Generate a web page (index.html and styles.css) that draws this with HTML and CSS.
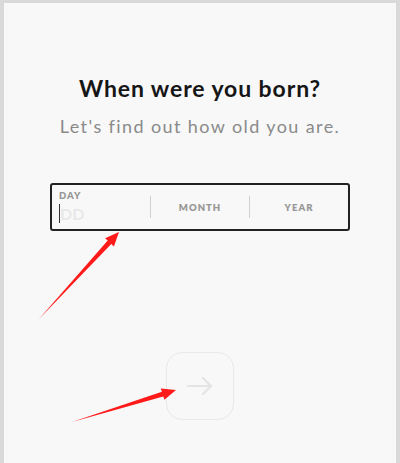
FILE: index.html
```html
<!DOCTYPE html>
<html lang="en">
<head>
  <meta charset="UTF-8" />
  <meta name="viewport" content="width=device-width, initial-scale=1.0"/>
  <title>Birthday</title>
  <link rel="stylesheet" href="styles.css">
</head>
<body>
  <!-- Main card -->
  <div class="panel">
    <h1 class="title">When were you born?</h1>
    <p class="subtitle">Let's find out how old you are.</p>

    <!-- Date of birth field -->
    <div class="date-field">
      <div class="part part-day">
        <span class="part-label">DAY</span>
        <span class="part-input"><span class="caret"></span>DD</span>
      </div>
      <span class="divider"></span>
      <div class="part"><span class="part-label">MONTH</span></div>
      <span class="divider"></span>
      <div class="part"><span class="part-label">YEAR</span></div>
    </div>

    <!-- Next button (disabled) -->
    <button class="next-btn" type="button" disabled>
      <svg width="26" height="18" viewBox="0 0 26 18" fill="none" stroke="#e4e4e4" stroke-width="2.2" stroke-linecap="round" stroke-linejoin="round">
        <path d="M1 9h23"/>
        <path d="M16 1l8 8-8 8"/>
      </svg>
    </button>
  </div>

  <!-- Red annotation arrows -->
  <svg class="annotations" width="400" height="463" viewBox="0 0 400 463">
    <polygon fill="#ff1a1a" points="39,319 111.3,244 113.9,246.4 119,232 105.1,238.2 107.7,240.6"/>
    <polygon fill="#ff1a1a" points="72,422 163.3,396.5 164.4,399.8 176,390 160.8,388.4 161.9,391.7"/>
  </svg>
</body>
</html>
```

FILE: styles.css
```css
:root {
  --page-bg: #d9d9d9;
  --panel-bg: #f8f8f8;
  --text-dark: #161616;
  --text-muted: #8a8a8a;
  --label: #979797;
  --faint: #e6e6e6;
}

body {
  margin: 0;
  height: 463px;
  overflow: hidden;
  background: var(--page-bg);
  font-family: Lato, "Noto Sans", sans-serif;
  position: relative;
}

/* Card */
.panel {
  margin: 3px 4px 0;
  height: 460px;
  background: var(--panel-bg);
  display: flex;
  flex-direction: column;
  align-items: center;
  padding-top: 70px;
  box-sizing: border-box;
}

.title {
  margin: 0;
  font-size: 23px;
  font-weight: 700;
  line-height: 30px;
  color: var(--text-dark);
  letter-spacing: 0.9px;
}

.subtitle {
  margin: 12px 0 0;
  font-size: 18px;
  line-height: 22px;
  color: var(--text-muted);
  letter-spacing: 1.4px;
}

/* Date input */
.date-field {
  margin-top: 46px;
  width: 300px;
  height: 48px;
  box-sizing: border-box;
  border: 2px solid #222;
  border-radius: 3px;
  display: flex;
  align-items: center;
}

.part {
  flex: 0 0 98px;
  box-sizing: border-box;
  display: flex;
  justify-content: center;
  align-items: center;
  height: 100%;
}

.part-day {
  flex-direction: column;
  align-items: flex-start;
  justify-content: flex-start;
  padding: 5px 0 0 7px;
}

.part-label {
  font-size: 9.5px;
  font-weight: 800;
  letter-spacing: 1px;
  color: var(--label);
  line-height: 11px;
}

.part-input {
  position: relative;
  margin-top: 3px;
  font-size: 16px;
  font-weight: 700;
  line-height: 20px;
  color: #e8e8e8;
  padding-left: 1px;
}

.caret {
  position: absolute;
  left: 0;
  top: 0;
  width: 1px;
  height: 19px;
  background: #333;
}

.divider {
  width: 1px;
  height: 22px;
  background: #d0d0d0;
}

/* Next button */
.next-btn {
  margin-top: 121px;
  width: 68px;
  height: 68px;
  border: 1.5px solid #e9e9e9;
  border-radius: 16px;
  background: transparent;
  display: flex;
  align-items: center;
  justify-content: center;
  padding: 0;
}

.annotations {
  position: absolute;
  left: 0;
  top: 0;
  pointer-events: none;
}
```
